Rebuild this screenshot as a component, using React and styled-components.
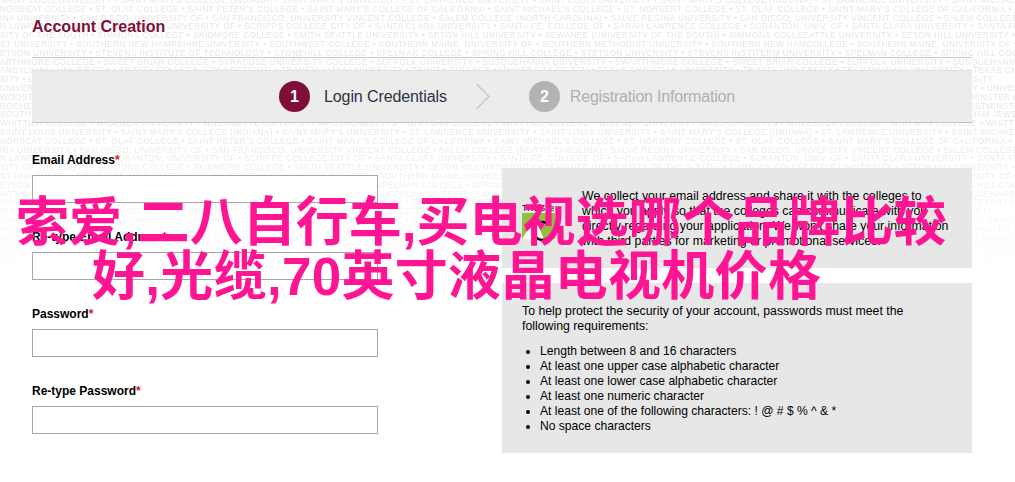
import styled, { createGlobalStyle } from "styled-components";

const GlobalStyle = createGlobalStyle`
  html, body { margin: 0; padding: 0; background: #fff; }
  body { font-family: "Liberation Sans", Arial, sans-serif; color: #000; }
`;

const COLLEGE_ROWS = [
  "SAINT LOUIS UNIVERSITY • SAINT MARY'S COLLEGE (INDIANA) • SAINT MARY'S UNIVERSITY • ST. LAWRENCE UNIVERSITY • SAINT LOUIS UNIVERSITY • SAINT MARY'S COLLEGE (INDIANA) • ST. LAWRENCE UNIVERSITY • SAINT MICHAEL'S",
  "NORBEAT COLLEGE • ST. OLAF COLLEGE • SAINT PETER'S COLLEGE • SAINT MARY'S COLLEGE OF CALIFORNIA • SAINT MICHAEL'S COLLEGE • ST. NORBERT COLLEGE • ST. OLAF COLLEGE • SAINT MARY'S COLLEGE OF CALIFORNIA • SAINT MICHAEL'S",
  "INA UNIVERSITY • SAN DIEGO, UNIVERSITY OF • SAN FRANCISCO, UNIVERSITY VINCENT COLLEGE • SALEM COLLEGE (NORTH CAROLINA) • SALVE REGINA UNIVERSITY • SAN DIEGO, UNIVERSITY VINCENT COLLEGE • SALEM COLLEGE (NORTH CAROLINA)",
  "N LAWRENCE COLLEGE • SCRANTON, UNIVERSITY OF • SCRIPPS COLLEGE CITY OF • SANTA CLARA UNIVERSITY • SANTA FE, COLLEGE OF • SARAH LAWRENCE COLLEGE • SCRANTON, UNIV. OF • SANTA CLARA UNIVERSITY • SANTA FE, COLLEGE OF",
  "SITY OF THE SOUTH • SIMMONS COLLEGE • SKIDMORE COLLEGE • SMITH SEATTLE UNIVERSITY • SETON HILL UNIVERSITY • SEWANEE (UNIVERSITY OF THE SOUTH) • SIMMONS COLLSEATTLE UNIVERSITY • SETON HILL UNIVERSITY • SEWANEE",
  "ST UNIVERSITY • SOUTHERN NEW HAMPSHIRE UNIVERSITY • SOUTHWEST COLLEGE • SOUTHERN MAINE, UNIVERSITY OF • SOUTHERN METHODIST UNIVERSITY • SOUTHERN NEW HAMCOLLEGE • SOUTHERN MAINE, UNIVERSITY OF • SOUTHERN",
  "ETSON UNIVERSITY • STEVENS INSTITUTE OF TECHNOLOGY • STONEHILL COLLEGE • SPELMAN COLLEGE • SPRING HILL COLLEGE • STETSON UNIVERSITY • STEVENS INSTITERM UNIVERSITY • SPELMAN COLLEGE • SPRING HILL COLLEGE • STETSON",
  "ARTHMORE COLLEGE • SWEET BRIAR COLLEGE • SYRACUSE UNIVERSITY COLLEGE • SUFFOLK UNIVERSITY • SUSQUEHANNA UNIVERSITY • SWARTHMORE COLLEGE • SWEET BRIAR COLLEGE • SUFFOLK UNIVERSITY • SUSQUEHANNA UNIVERSITY",
  "ANSYLVANIA UNIVERSITY • TRINITY COLLEGE (CONNECTICUT) • TRANSYLVANIA UNIVERSITY • TRINITY COLLEGE • UNIVERSITY OF TCU • TEXAS CHRISTIAN UNIVERSITY • TRINITY UNIVERSITY • TRANSYLVANIA UNIVERSITY • TEXAS CHRISTIAN",
  "SITY • UNION COLLEGE • VANDERBILT UNIVERSITY • VILLANOVA UNIVERSITY • VASSAR COLLEGE • VIRGINIA UNIVERSITY • UNION COLLEGE • VANDERBILT UNIVERSITY • VILLANOVA UNIVERSITY • VASSAR COLLEGE • UNIVERSITY",
  "UNIVERSITY • WAKE FOREST UNIVERSITY • WASHINGTON COLLEGE • WELLESLEY COLLEGE • WESLEYAN UNIVERSITY • WAKE FOREST UNIVERSITY • WASHINGTON COLLEGE • WELLESLEY COLLEGE • WESLEYAN UNIVERSITY • UNIVERSITY",
  "WOOSTER • WESTERN COLLEGE • WESTMINSTER COLLEGE • WHEATON COLLEGE • WESTMONT COLLEGE • WOOSTER • WESTERN COLLEGE • WESTMINSTER COLLEGE • WHEATON COLLEGE • WESTMONT COLLEGE • WESTMINSTER COLLEGE",
  "ROCHESTER • WHEELOCK COLLEGE • WHITMAN COLLEGE • WHITWORTH UNIVERSITY • WILLIAMS COLLEGE • ROCHESTER • WHEELOCK COLLEGE • WHITMAN COLLEGE • WHITWORTH UNIVERSITY • WILLIAMS COLLEGE • WESTMINSTER",
  "SOUTH • WILLIAM JEWELL COLLEGE • WARTBURG COLLEGE • WOFFORD COLLEGE • YALE UNIVERSITY • SOUTH • WILLIAM JEWELL COLLEGE • WARTBURG COLLEGE • WOFFORD COLLEGE • YALE UNIVERSITY • SOUTH • WILLIAM JEWELL",
  "WHITTIER COLLEGE • WIDENER UNIVERSITY • WILLAMETTE UNIVERSITY MASSACHUSETTS • WHITMAN COLLEGE • WHITTIER COLLEGE • WIDENER UNIVERSITY MASSACHUSETTS • WHEELOCK COLLEGE • WHITMAN COLLEGE • WHITTIER COLLEGE",
];

const REQUIREMENTS = [
  "Length between 8 and 16 characters",
  "At least one upper case alphabetic character",
  "At least one lower case alphabetic character",
  "At least one numeric character",
  "At least one of the following characters: ! @ # $ % ^ & *",
  "No space characters",
];

const Page = styled.div`
  position: relative;
  width: 1015px;
  height: 482px;
  overflow: hidden;
  background: #fff;
`;

// faint college names behind the top of the page
const Watermark = styled.div`
  position: absolute;
  top: -3px;
  left: 0;
  right: 0;
  height: 300px;
  overflow: hidden;
  -webkit-mask-image: linear-gradient(to bottom, #000 0, #000 120px, transparent 285px);
  mask-image: linear-gradient(to bottom, #000 0, #000 120px, transparent 285px);
`;

const WatermarkRow = styled.div`
  font-size: 8.2px;
  line-height: 8.8px;
  letter-spacing: 0.45px;
  white-space: nowrap;
  color: #e6e6e6;
`;

const Content = styled.div`
  position: relative;
  width: 940px;
  margin-left: 32px;
`;

const Header = styled.div`
  height: 58px;
  padding-top: 17px;
  box-sizing: border-box;
  border-bottom: 1px solid #c9c9c9;
`;

const Title = styled.h1`
  margin: 0;
  font-size: 16px;
  line-height: 19px;
  font-weight: 700;
  color: #7f0f38;
`;

const Steps = styled.div`
  display: flex;
  align-items: center;
  height: 53px;
  margin-top: 12px;
  padding-left: 247px;
  box-sizing: border-box;
  background: #ececec;
  border-top: 1px solid #e0e0e0;
  border-bottom: 1px solid #c4c4c4;
`;

const StepCircle = styled.div`
  display: flex;
  align-items: center;
  justify-content: center;
  width: 31px;
  height: 31px;
  border-radius: 50%;
  background: ${(p) => (p.$active ? "#7f0f38" : "#b3b3b3")};
  color: #fff;
  font-size: 16px;
  font-weight: 700;
`;

const StepLabel = styled.div`
  margin-left: ${(p) => (p.$active ? "14px" : "10px")};
  font-size: 16px;
  letter-spacing: ${(p) => (p.$active ? "-0.1px" : "-0.2px")};
  color: ${(p) => (p.$active ? "#2d3142" : "#b0b0b0")};
`;

const Chevron = styled.svg`
  display: block;
  width: 16px;
  height: 27px;
  margin: 0 38px 0 28px;
`;

const Columns = styled.div`
  display: flex;
  justify-content: space-between;
  margin-top: 30px;
`;

const Form = styled.form`
  display: flex;
  flex-direction: column;
  gap: 27px;
  width: 346px;
`;

const Field = styled.div`
  display: flex;
  flex-direction: column;
  gap: 7px;
`;

const Label = styled.label`
  font-size: 12px;
  line-height: 15px;
  font-weight: 700;
`;

const Required = styled.span`
  color: #e8101c;
`;

const Input = styled.input`
  display: block;
  width: 100%;
  height: 28px;
  box-sizing: border-box;
  margin: 0;
  border: 1px solid #a6a6a6;
  background: #fff;
`;

const Side = styled.div`
  display: flex;
  flex-direction: column;
  gap: 15px;
  width: 470px;
  margin-top: 15px;
`;

const InfoBox = styled.div`
  display: flex;
  gap: 26px;
  height: 100px;
  box-sizing: border-box;
  padding: 21px 20px 0;
  background: #e7e7e7;
`;

const Seal = styled.svg`
  flex: none;
  display: block;
  width: 34px;
  height: 50px;
  margin-top: 13px;
`;

const BodyText = styled.p`
  margin: 0;
  font-size: 12.3px;
  line-height: 15px;
  white-space: nowrap;
`;

const RulesBox = styled.div`
  height: 170px;
  box-sizing: border-box;
  padding: 21px 20px 0;
  background: #e7e7e7;
`;

const RulesList = styled.ul`
  margin: 10px 0 0;
  padding: 0 0 0 18px;
  font-size: 12.1px;
  line-height: 15px;
`;

// promo text stamped across the form
const Overlay = styled.div`
  position: absolute;
  top: 196px;
  left: 16px;
  display: flex;
  flex-direction: column;
  font-family: "Liberation Sans", "Noto Sans CJK SC", sans-serif;
  font-size: 53px;
  font-weight: 700;
  line-height: 54px;
  white-space: nowrap;
  color: #ff1493;
`;

const OverlayLine = styled.div`
  margin-left: ${(p) => p.$indent || 0}px;
  letter-spacing: ${(p) => p.$spacing || 0}px;
`;

function RequiredLabel({ children }) {
  return (
    <Label>
      {children}
      <Required>*</Required>
    </Label>
  );
}

export default function App() {
  return (
    <Page>
      <GlobalStyle />
      <Watermark>
        {COLLEGE_ROWS.concat(COLLEGE_ROWS, COLLEGE_ROWS).map((row, i) => (
          <WatermarkRow key={i}>{row}</WatermarkRow>
        ))}
      </Watermark>
      <Content>
        <Header>
          <Title>Account Creation</Title>
        </Header>
        <Steps>
          <StepCircle $active>1</StepCircle>
          <StepLabel $active>Login Credentials</StepLabel>
          <Chevron viewBox="0 0 16 27">
            <path d="M1.5 1 L14 13.5 L1.5 26" fill="none" stroke="#c4c4c4" strokeWidth="1.2" />
          </Chevron>
          <StepCircle>2</StepCircle>
          <StepLabel>Registration Information</StepLabel>
        </Steps>
        <Columns>
          <Form>
            <Field>
              <RequiredLabel>Email Address</RequiredLabel>
              <Input type="text" />
            </Field>
            <Field>
              <RequiredLabel>Re-type Email Address</RequiredLabel>
              <Input type="text" />
            </Field>
            <Field>
              <RequiredLabel>Password</RequiredLabel>
              <Input type="password" />
            </Field>
            <Field>
              <RequiredLabel>Re-type Password</RequiredLabel>
              <Input type="password" />
            </Field>
          </Form>
          <Side>
            <InfoBox>
              <Seal viewBox="0 0 34 50">
                <text x="0" y="9" fontSize="8.5" fontFamily="Liberation Sans" fill="#000">TRUSTe</text>
                <rect x="0" y="11" width="33" height="26" fill="#8fc13e" />
                <path d="M0 37 L13 16 L22 37 Z" fill="#fff" />
                <path d="M26 22 A9 9 0 1 0 26 36" fill="none" stroke="#000" strokeWidth="2.4" />
              </Seal>
              <BodyText>
                We collect your email address and share it with the colleges to
                <br />
                which you apply so that the colleges can communicate with you
                <br />
                directly regarding your application. We won't share your information
                <br />
                with third parties for marketing or promotional services.
              </BodyText>
            </InfoBox>
            <RulesBox>
              <BodyText>
                To help protect the security of your account, passwords must meet the
                <br />
                following requirements:
              </BodyText>
              <RulesList>
                {REQUIREMENTS.map((item) => (
                  <li key={item}>{item}</li>
                ))}
              </RulesList>
            </RulesBox>
          </Side>
        </Columns>
      </Content>
      <Overlay>
        <OverlayLine>索爱,二八自行车,买电视选哪个品牌比较</OverlayLine>
        <OverlayLine $indent={76} $spacing={0.3}>好,光缆,70英寸液晶电视机价格</OverlayLine>
      </Overlay>
    </Page>
  );
}
